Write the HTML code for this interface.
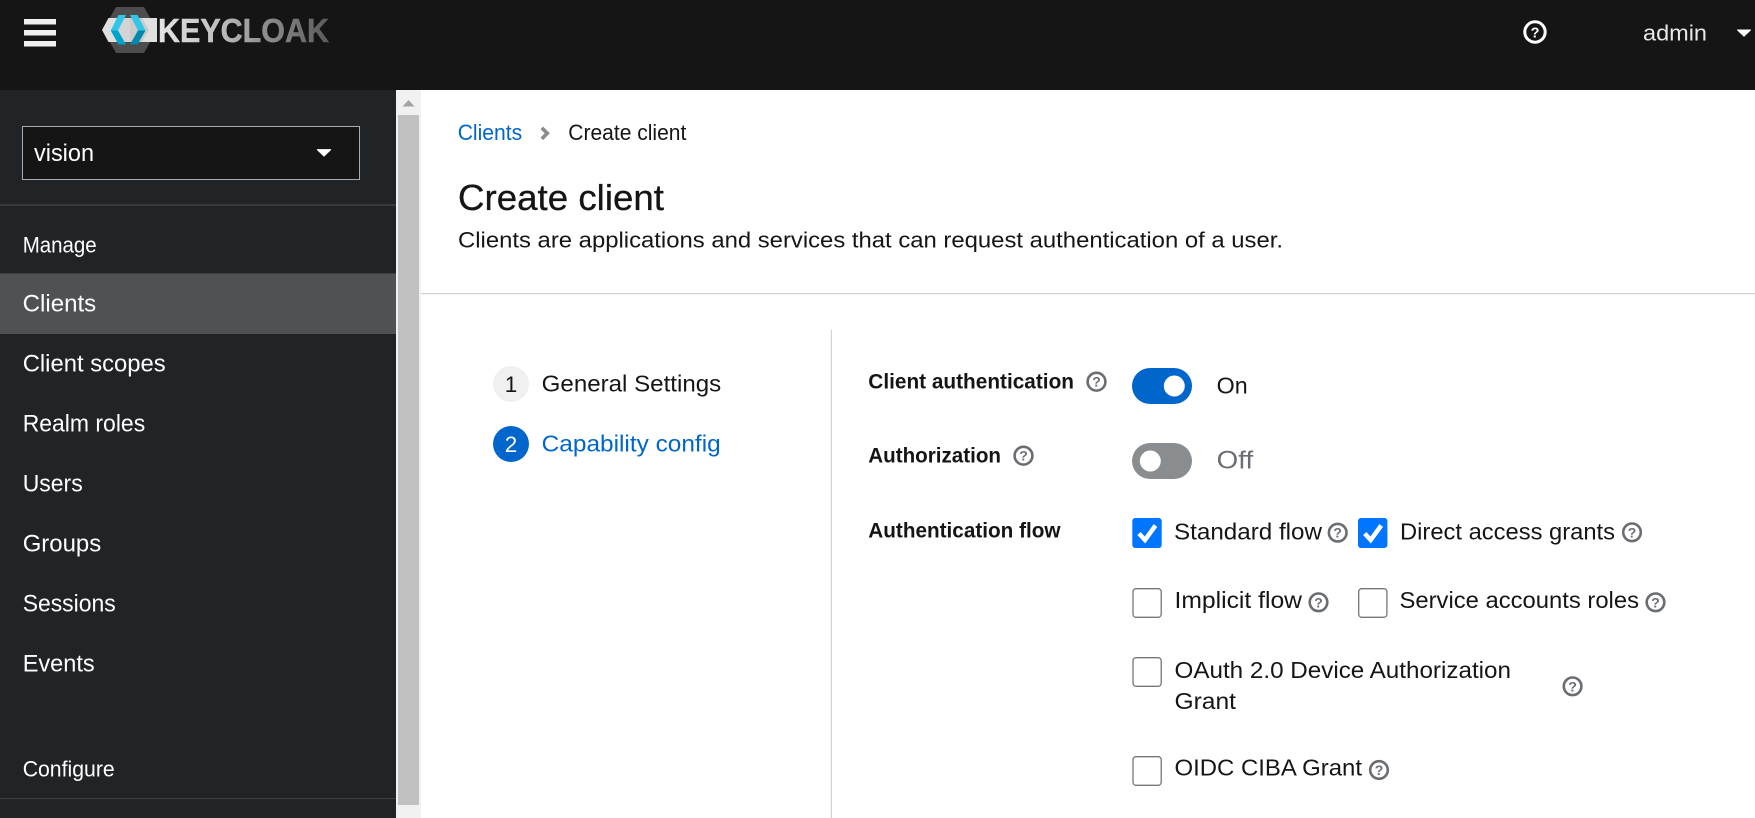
<!DOCTYPE html>
<html lang="en">
<head>
<meta charset="utf-8">
<title>Create client</title>
<style>
html,body{margin:0;padding:0;width:1755px;height:818px;overflow:hidden;background:#fff}
svg{display:block}
text{font-family:"Liberation Sans",sans-serif;white-space:pre}
.n{font-size:24px;fill:#fff}
.s{font-size:22px;fill:#fff}
.m{font-size:23px;fill:#151515}
.b{font-size:21.5px;font-weight:700;fill:#151515}
.q{font-size:14px;font-weight:700;fill:#6a6e73;text-anchor:middle}
.h{fill:none;stroke:#6a6e73;stroke-width:2.6}
</style>
</head>
<body>
<svg width="1755" height="818" viewBox="0 0 1755 818" xmlns="http://www.w3.org/2000/svg">
<defs>
<linearGradient id="kc" gradientUnits="userSpaceOnUse" x1="158" y1="0" x2="330" y2="0">
<stop offset="0" stop-color="#e4e4e4"/><stop offset="0.35" stop-color="#c0c0c0"/><stop offset="0.6" stop-color="#919191"/><stop offset="1" stop-color="#5a5a5a"/>
</linearGradient>
</defs>
<!-- backgrounds -->
<rect x="0" y="0" width="1755" height="90" fill="#151515"/>
<rect x="0" y="90" width="396" height="728" fill="#212427"/>
<rect x="396" y="90" width="25" height="728" fill="#f1f1f1"/>
<rect x="398" y="115" width="21" height="690" fill="#c1c1c1"/>
<polygon points="402.500,106.500 408.500,100 414.500,106.500" fill="#a3a3a3"/>

<!-- header -->
<rect x="24" y="19" width="32" height="5.500" fill="#f0f0f0"/>
<rect x="24" y="30" width="32" height="5.500" fill="#f0f0f0"/>
<rect x="24" y="41" width="32" height="5.500" fill="#f0f0f0"/>

<!-- logo -->
<polygon points="116,7 144,7 157,30 144,53 116,53 103,30" fill="#4d4d4d"/>
<polygon points="102,30 108.500,18 157,18 157,42 108.500,42" fill="#e0e0e0"/>
<polygon points="118,18 130,18 130,42 118,42 111,30" fill="#d4d4d4"/>
<polygon points="130,18 142,18 149,30 142,42 130,42" fill="#cbcbcb"/>
<polygon points="118.500,15 126,15 118,30.500 110.700,30.500" fill="#33c6e9"/>
<polygon points="110.700,30.500 118,30.500 126,44.500 118.500,44.500" fill="#00a4ca"/>
<polygon points="130,15 137.500,15 145.500,30.500 138,30.500" fill="#33c6e9"/>
<polygon points="138,30.500 145.500,30.500 137.500,44.500 130,44.500" fill="#0089ab"/>
<text x="158" y="41.800" font-size="33" font-weight="700" fill="url(#kc)" stroke="url(#kc)" stroke-width="0.500" textLength="171" lengthAdjust="spacingAndGlyphs">KEYCLOAK</text>

<circle cx="1535" cy="32" r="10.200" fill="none" stroke="#fff" stroke-width="3"/>
<text x="1535" y="37.500" font-size="14.500" font-weight="700" fill="#fff" text-anchor="middle">?</text>
<text x="1643" y="40.700" font-size="22.500" fill="#e8e8e8" textLength="64" lengthAdjust="spacingAndGlyphs">admin</text>
<polygon points="1737.500,30 1750.500,30 1744,36.200" fill="#fff" stroke="#fff" stroke-width="1" stroke-linejoin="round"/>

<!-- realm selector -->
<rect x="22.500" y="126.500" width="337" height="53" fill="#151515" stroke="#a8abae" stroke-width="1"/>
<text x="34" y="161" font-size="24" fill="#fff" textLength="60" lengthAdjust="spacingAndGlyphs">vision</text>
<polygon points="317.500,149.700 330.500,149.700 324,156" fill="#fff" stroke="#fff" stroke-width="1.200" stroke-linejoin="round"/>
<rect x="0" y="204" width="396" height="2" fill="#37393c"/>

<!-- nav -->
<text class="s" x="22.700" y="252.700" textLength="74" lengthAdjust="spacingAndGlyphs">Manage</text>
<rect x="0" y="273" width="396" height="61" fill="#4f5255"/>
<rect x="0" y="273" width="396" height="1" fill="#3c3f42"/>
<text class="n" x="22.700" y="311.700" textLength="73.500" lengthAdjust="spacingAndGlyphs">Clients</text>
<text class="n" x="22.700" y="371.700" textLength="143" lengthAdjust="spacingAndGlyphs">Client scopes</text>
<text class="n" x="22.700" y="431.700" textLength="122.500" lengthAdjust="spacingAndGlyphs">Realm roles</text>
<text class="n" x="22.700" y="491.700" textLength="60" lengthAdjust="spacingAndGlyphs">Users</text>
<text class="n" x="22.700" y="551.700" textLength="78.500" lengthAdjust="spacingAndGlyphs">Groups</text>
<text class="n" x="22.700" y="611.700" textLength="93" lengthAdjust="spacingAndGlyphs">Sessions</text>
<text class="n" x="22.700" y="671.700" textLength="72" lengthAdjust="spacingAndGlyphs">Events</text>
<text class="s" x="22.700" y="776.700" textLength="92" lengthAdjust="spacingAndGlyphs">Configure</text>
<rect x="0" y="798" width="396" height="1" fill="#3c3f42"/>

<!-- page header -->
<text x="457.700" y="140" font-size="22.500" fill="#0066cc" textLength="64.500" lengthAdjust="spacingAndGlyphs">Clients</text>
<polyline points="541.800,127.800 547.300,133.300 541.800,138.800" fill="none" stroke="#8a8d90" stroke-width="3.600"/>
<text x="568.300" y="140" font-size="22.500" fill="#151515" textLength="118" lengthAdjust="spacingAndGlyphs">Create client</text>
<text x="458" y="210" font-size="36" fill="#151515" stroke="#151515" stroke-width="0.300" textLength="206" lengthAdjust="spacingAndGlyphs">Create client</text>
<text x="458" y="247.700" font-size="22.500" fill="#151515" textLength="825" lengthAdjust="spacingAndGlyphs">Clients are applications and services that can request authentication of a user.</text>
<rect x="421" y="293" width="1334" height="1.200" fill="#d2d2d2"/>

<!-- wizard nav -->
<circle cx="511" cy="384" r="18" fill="#f0f0f0"/>
<text x="511" y="392" font-size="22.500" fill="#151515" text-anchor="middle">1</text>
<text class="m" x="541.700" y="391.700" textLength="179.500" lengthAdjust="spacingAndGlyphs">General Settings</text>
<circle cx="511" cy="444" r="18" fill="#0066cc"/>
<text x="511" y="452" font-size="22.500" fill="#fff" text-anchor="middle">2</text>
<text class="m" x="541.700" y="451.700" style="fill:#0066cc" textLength="179" lengthAdjust="spacingAndGlyphs">Capability config</text>
<rect x="830.800" y="330" width="1.200" height="488" fill="#d2d2d2"/>

<!-- form labels -->
<text class="b" x="868.300" y="388.700" textLength="205.700" lengthAdjust="spacingAndGlyphs">Client authentication</text>
<circle class="h" cx="1096.500" cy="381.700" r="8.900"/>
<text class="q" x="1096.500" y="386.700">?</text>
<text class="b" x="868.300" y="462.700" textLength="132.700" lengthAdjust="spacingAndGlyphs">Authorization</text>
<circle class="h" cx="1023.500" cy="455.700" r="8.900"/>
<text class="q" x="1023.500" y="460.700">?</text>
<text class="b" x="868.300" y="537.700" textLength="192.200" lengthAdjust="spacingAndGlyphs">Authentication flow</text>

<!-- toggles -->
<rect x="1132" y="368" width="60" height="36" rx="18" fill="#0066cc"/>
<circle cx="1174.300" cy="386" r="10.500" fill="#fff"/>
<text class="m" x="1216.700" y="393.300" textLength="31" lengthAdjust="spacingAndGlyphs">On</text>
<rect x="1132" y="443" width="60" height="36" rx="18" fill="#8a8d90"/>
<circle cx="1150.300" cy="461" r="10.500" fill="#fff"/>
<text x="1216.700" y="468.300" font-size="25" fill="#6a6e73" textLength="36.500" lengthAdjust="spacingAndGlyphs">Off</text>

<!-- checkboxes -->
<rect x="1132.300" y="518" width="29.400" height="30" rx="3" fill="#0075ff"/>
<polyline points="1139,533.500 1145,540 1155.500,525.500" fill="none" stroke="#fff" stroke-width="4.500"/>
<text class="m" x="1174" y="539.500" textLength="148" lengthAdjust="spacingAndGlyphs">Standard flow</text>
<circle class="h" cx="1337.700" cy="532.700" r="8.800"/>
<text class="q" x="1337.700" y="537.700">?</text>

<rect x="1358" y="518" width="29.400" height="30" rx="3" fill="#0075ff"/>
<polyline points="1364.700,533.500 1370.700,540 1381.200,525.500" fill="none" stroke="#fff" stroke-width="4.500"/>
<text class="m" x="1400" y="539.500" textLength="215" lengthAdjust="spacingAndGlyphs">Direct access grants</text>
<circle class="h" cx="1632" cy="532.300" r="8.800"/>
<text class="q" x="1632" y="537.300">?</text>

<rect x="1133" y="588.700" width="28.200" height="28.600" rx="3" fill="#fff" stroke="#767676" stroke-width="1.300"/>
<text class="m" x="1174.500" y="608" textLength="127.500" lengthAdjust="spacingAndGlyphs">Implicit flow</text>
<circle class="h" cx="1318.500" cy="602.300" r="8.800"/>
<text class="q" x="1318.500" y="607.300">?</text>

<rect x="1358.700" y="588.700" width="28.200" height="28.600" rx="3" fill="#fff" stroke="#767676" stroke-width="1.300"/>
<text class="m" x="1399.500" y="608" textLength="239.500" lengthAdjust="spacingAndGlyphs">Service accounts roles</text>
<circle class="h" cx="1655.500" cy="602.300" r="8.800"/>
<text class="q" x="1655.500" y="607.300">?</text>

<rect x="1133" y="657.700" width="28.200" height="28.600" rx="3" fill="#fff" stroke="#767676" stroke-width="1.300"/>
<text class="m" x="1174.500" y="678" textLength="336.500" lengthAdjust="spacingAndGlyphs">OAuth 2.0 Device Authorization</text>
<text class="m" x="1174.500" y="709" textLength="61.500" lengthAdjust="spacingAndGlyphs">Grant</text>
<circle class="h" cx="1572.600" cy="686.300" r="8.800"/>
<text class="q" x="1572.600" y="691.300">?</text>

<rect x="1133" y="756.700" width="28.200" height="28.600" rx="3" fill="#fff" stroke="#767676" stroke-width="1.300"/>
<text class="m" x="1174.500" y="775.700" textLength="187.500" lengthAdjust="spacingAndGlyphs">OIDC CIBA Grant</text>
<circle class="h" cx="1379" cy="770" r="8.800"/>
<text class="q" x="1379" y="775">?</text>
</svg>
</body>
</html>
